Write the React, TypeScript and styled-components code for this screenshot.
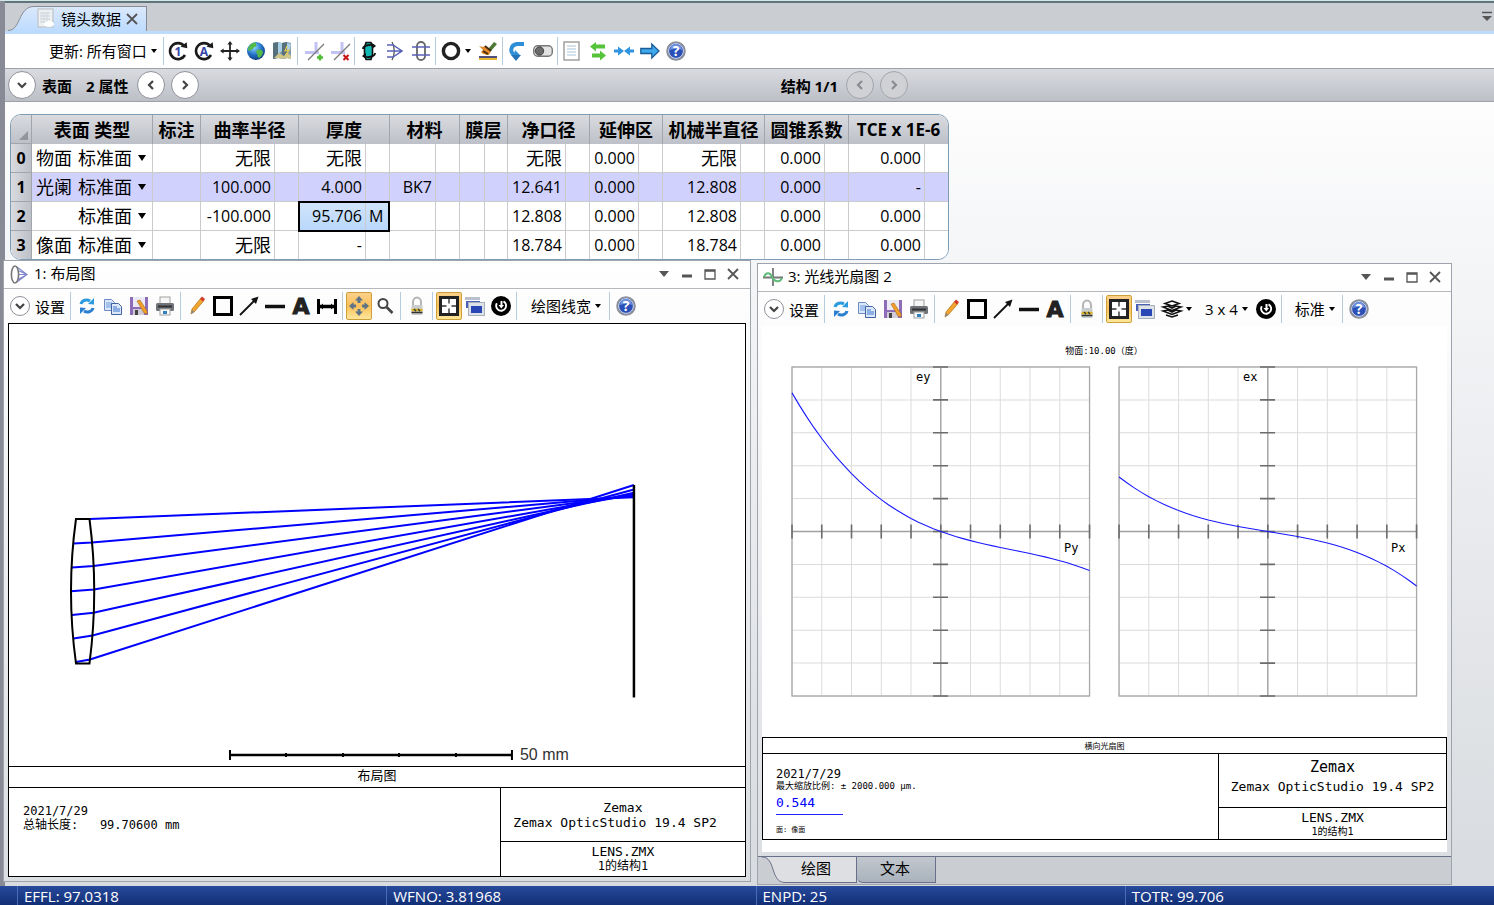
import React from "react";
import styled, { createGlobalStyle, css } from "styled-components";

const ui = `"Open Sans", "Noto Sans CJK SC", sans-serif`;
const mono = `"DejaVu Sans Mono", "Noto Sans CJK SC", monospace`;

const GlobalStyle = createGlobalStyle`
  * { box-sizing: border-box; }
  body { margin: 0; font-family: ${ui}; font-size: 15px; color: #000; }
  button, select { font: inherit; color: inherit; }
`;

/* ---------- shell ---------- */

const Page = styled.div`
  min-height: 100vh;
  display: flex;
  flex-direction: column;
  border-top: 1px solid #d3e6e6;
  background:
    linear-gradient(to right, #888b95 5px, transparent 5px),
    linear-gradient(#fdfdfd 100px, #f4f5f7 270px, #d7dade 100%);
`;

const Editor = styled.section`
  padding-left: 5px;
`;

const TabStrip = styled.div`
  height: 33px;
  display: flex;
  justify-content: space-between;
  align-items: flex-end;
  background: #cacdd2;
  border-top: 2px solid #61757c;
  border-bottom: 3px solid #bddbff;
`;

const DocTab = styled.div`
  display: flex;
  align-items: stretch;
  height: 25px;
`;

const DocTabBody = styled.div`
  display: flex;
  align-items: center;
  gap: 5px;
  padding: 0 8px 2px 2px;
  border: solid #868b96;
  border-width: 1px 1px 0 0;
  background: linear-gradient(#dbe9fb, #bddbff);
`;

const PlainButton = styled.button`
  display: flex;
  align-items: center;
  justify-content: center;
  padding: 0;
  border: 0;
  background: none;
`;

const StripMenu = styled(PlainButton)`
  width: 14px;
  height: 28px;
`;

const Toolbar = styled.div`
  height: 34px;
  display: flex;
  align-items: center;
  white-space: nowrap;
`;

const MainToolbar = styled(Toolbar)`
  padding-left: 44px;
  background: #fff;
`;

const IconButton = styled.button<{ $active?: boolean; $wide?: boolean }>`
  flex: none;
  width: ${(p) => (p.$wide ? 38 : 26)}px;
  height: 28px;
  padding: 0;
  display: flex;
  align-items: center;
  justify-content: center;
  gap: 4px;
  border: 1px solid transparent;
  border-radius: 2px;
  background: none;
  ${(p) =>
    p.$active &&
    css`
      border-color: #d0a038;
      background: linear-gradient(#fbd08a, #fbc15a 50%, #fde79b);
    `}
`;

const Separator = styled.span<{ $wide?: boolean }>`
  flex: none;
  width: 1px;
  height: 28px;
  margin: ${(p) => (p.$wide ? "0 3px 0 2px" : "0 1px")};
  background: #b5cbe0;
`;

const MenuButton = styled.button<{ $left: number; $right: number }>`
  display: flex;
  align-items: center;
  gap: 4px;
  padding: 0 ${(p) => p.$right}px 0 ${(p) => p.$left}px;
  border: 0;
  background: none;
  line-height: 28px;
`;

const PropertyBar = styled.div`
  height: 34px;
  display: grid;
  grid-template-columns: 13fr 12fr;
  align-items: center;
  padding-left: 3px;
  border: solid #9ea1a8;
  border-width: 1px 0;
  background: linear-gradient(#d9dbe0, #bcbfc6);
  font-weight: 700;
`;

const BarGroup = styled.div`
  display: flex;
  align-items: center;
  gap: 6px;
  white-space: nowrap;
`;

const BarLabel = styled.span`
  display: flex;
  gap: 14px;
  padding-right: 2px;
`;

const RoundButton = styled.button<{ $small?: boolean }>`
  flex: none;
  width: ${(p) => (p.$small ? 20 : 28)}px;
  height: ${(p) => (p.$small ? 20 : 28)}px;
  padding: 0;
  display: flex;
  align-items: center;
  justify-content: center;
  border: 1px solid #8f9299;
  border-radius: 50%;
  background: #fff;
  color: #444;
  &:disabled {
    background: #cfd1d5;
    border-color: #a3a5ab;
    color: #8a8c92;
  }
`;

/* ---------- lens table ---------- */

const GridFrame = styled.div`
  width: max-content;
  margin: 12px 0 0 5px;
  border: 1px solid #7d9cb5;
  border-radius: 11px;
  overflow: hidden;
  background: #fff;
`;

const LensTable = styled.table`
  width: 937px;
  table-layout: fixed;
  border-collapse: separate;
  border-spacing: 0;
  line-height: 20px;
`;

const HeadCell = styled.th`
  height: 29px;
  padding: 1px 0 0;
  border-right: 1px solid #a2a5ac;
  background: linear-gradient(#d9dbdf, #bdc0c8);
  font-size: 18px;
  white-space: nowrap;
  &:last-child {
    border-right: 0;
    font-size: 17px;
  }
`;

const CornerCell = styled(HeadCell)`
  border-bottom: 1px solid #a2a5ac;
  vertical-align: bottom;
  text-align: right;
  font-size: 0;
  line-height: 0;
  padding: 0 3px 3px 0;
`;

const Row = styled.tr<{ $stop?: boolean }>`
  background: ${(p) => (p.$stop ? "#d1d1fe" : "#fff")};
  &:last-child > * {
    height: 28px;
    border-bottom: 0;
  }
`;

const IndexCell = styled.th`
  height: 29px;
  padding: 0;
  border: solid #a2a5ac;
  border-width: 0 1px 1px 0;
  background: linear-gradient(to right, #d9dbdf, #bdc0c8);
  font-size: 16px;
`;

const Cell = styled.td<{ $cjk?: boolean; $active?: boolean; $flag?: boolean }>`
  position: relative;
  height: 29px;
  padding: 0 3px;
  border: solid #cbcbcb;
  border-width: 0 1px 1px 0;
  font-size: ${(p) => (p.$cjk ? 18 : 16)}px;
  text-align: ${(p) => (p.$flag ? "left" : "right")};
  white-space: nowrap;
  ${(p) => p.$active && "background: linear-gradient(#d2e4fa, #b9d8fc);"}
  &:last-child {
    border-right: 0;
  }
`;

const TypeCell = styled(Cell)`
  padding: 0;
`;

const FocusRing = styled.span`
  position: absolute;
  inset: -1px -25px -2px -1px;
  border: 2px solid #000;
  z-index: 1;
`;

const TypeLine = styled.div`
  display: flex;
  align-items: center;
  justify-content: space-between;
  padding: 0 6px 0 4px;
`;

const TypePick = styled.label`
  display: flex;
  align-items: center;
  gap: 6px;
`;

const TypeSelect = styled.select`
  appearance: none;
  width: 54px;
  padding: 0;
  border: 0;
  background: none;
  line-height: 24px;
`;

/* ---------- analysis windows ---------- */

const Workspace = styled.main`
  flex: 1;
  display: flex;
  gap: 6px;
  padding: 0 42px 1px 3px;
`;

const AnalysisWindow = styled.section<{ $grow: number; $top: number; $bottom: number }>`
  flex: ${(p) => p.$grow} 1 0;
  min-width: 0;
  display: flex;
  flex-direction: column;
  margin: ${(p) => p.$top}px 0 ${(p) => p.$bottom}px;
  border: 1px solid #9fa3ab;
  background: linear-gradient(#fff, #fcfcfd 64px, #f1f2f4 200px, #dadde1);
`;

const TitleBar = styled.header`
  flex: none;
  height: 28px;
  display: flex;
  align-items: center;
  gap: 5px;
  padding: 0 5px 2px;
  border-bottom: 1px solid #b4b7bc;
`;

const WindowTitle = styled.h2`
  flex: 1;
  margin: 0;
  padding-bottom: 2px;
  font-size: 15px;
  font-weight: 400;
  line-height: 24px;
`;

const WindowButton = styled(PlainButton)`
  width: 23px;
  height: 22px;
`;

const WindowButtons = styled.div`
  display: flex;
`;

const PlotToolbar = styled(Toolbar)`
  padding-left: 6px;
`;

const SettingsToggle = styled.label`
  display: flex;
  align-items: center;
  gap: 5px;
  padding-right: 3px;
`;

const Sheet = styled.div<{ $framed?: boolean }>`
  flex: 1;
  display: flex;
  flex-direction: column;
  margin: 0 4px 4px;
  background: #fff;
  border: ${(p) => (p.$framed ? "1px solid #000" : "0")};
`;

const Plot = styled.svg`
  display: block;
  flex: 1 0 360px;
  width: 100%;
  height: 360px;
`;

const SheetTitle = styled.div<{ $small?: boolean }>`
  height: ${(p) => (p.$small ? 15 : 20)}px;
  line-height: ${(p) => (p.$small ? 17 : 18)}px;
  font-family: ${mono};
  font-size: ${(p) => (p.$small ? 8 : 13)}px;
  text-align: center;
`;

const LayoutCaption = styled(SheetTitle)`
  height: 21px;
  border-top: 1px solid #000;
`;

const Legend = styled.div<{ $side: number }>`
  display: grid;
  grid-template-columns: 1fr ${(p) => p.$side}px;
  border-top: 1px solid #000;
  font-family: ${mono};
  white-space: pre;
`;

const LegendNotes = styled.div`
  padding: 16px 14px 0;
  font-size: 12px;
  line-height: 14px;
`;

const LegendSide = styled.div`
  display: flex;
  flex-direction: column;
  border-left: 1px solid #000;
  text-align: center;
  font-size: 13px;
  line-height: 15px;
`;

const LegendBlock = styled.div<{ $h: number; $rule?: boolean; $above?: number; $below?: number }>`
  height: ${(p) => p.$h}px;
  display: flex;
  flex-direction: column;
  justify-content: center;
  padding: ${(p) => p.$above ?? 0}px 0 ${(p) => p.$below ?? 0}px;
  ${(p) => p.$rule && "border-bottom: 1px solid #000;"}
`;

const Line = styled.div<{ $size: number; $lh: number }>`
  font-size: ${(p) => p.$size}px;
  line-height: ${(p) => p.$lh}px;
`;

const LegendBox = styled.div`
  margin-bottom: 12px;
  border: 1px solid #000;
`;

const FieldNotes = styled.div`
  padding: 14px 13px 0;
`;

const FieldKey = styled.div`
  width: 67px;
  margin-bottom: 9px;
  border-bottom: 1px solid #22f;
  color: #00f;
`;

const ViewTabs = styled.div`
  flex: none;
  height: 28px;
  display: flex;
  background: #cacdd2;
  border-top: 1px solid #69718a;
`;

const ViewTab = styled.button<{ $active?: boolean }>`
  height: 26px;
  padding: 0 25px 3px ${(p) => (p.$active ? 16 : 23)}px;
  border: solid #69718a;
  border-width: 0 1px 1px 0;
  border-bottom-left-radius: ${(p) => (p.$active ? 0 : 6)}px;
  background: ${(p) => (p.$active ? "#dddfe2" : "linear-gradient(#c2c7ce, #a9b2bc)")};
  line-height: 22px;
`;

const StatusBar = styled.footer`
  flex: none;
  height: 19px;
  display: flex;
  padding-left: 17px;
  overflow: hidden;
  background: linear-gradient(#274a9c, #122f76);
  color: #fff;
`;

const StatusItem = styled.div`
  flex: 0 0 25%;
  padding-left: 6px;
  border-left: 1px solid #4a6bb5;
  line-height: 20px;
`;

/* ---------- icons ---------- */

const Drawing = styled.svg`
  flex: none;
  overflow: visible;
`;

const Svg = ({ children, w = 20, h = 20 }: { children: React.ReactNode; w?: number; h?: number }) => (
  <Drawing width={w} height={h} viewBox={`0 0 ${w} ${h}`} fill="none" aria-hidden="true">
    {children}
  </Drawing>
);

const Caret = ({ w = 6, fill = "#000" }: { w?: number; fill?: string }) => (
  <svg width={w} height={w > 6 ? 6 : 4} viewBox="0 0 8 5" preserveAspectRatio="none" aria-hidden="true">
    <path d="M0 0h8L4 5z" fill={fill} />
  </svg>
);

const Chevron = ({ d, s = 10 }: { d: "down" | "left" | "right"; s?: number }) => (
  <svg width={s} height={s} viewBox="0 0 10 10" fill="none" aria-hidden="true">
    <path
      d={{ down: "M1 3l4 4 4-4", left: "M7 1L3 5l4 4", right: "M3 1l4 4-4 4" }[d]}
      stroke="currentColor"
      strokeWidth="2.2"
    />
  </svg>
);

const CycleIcon = ({ letter }: { letter: string }) => (
  <Svg>
    <path d="M16 4.8A8 8 0 1 0 17 14" stroke="#1a1a1a" strokeWidth="2.6" />
    <path d="M12.5 5.8l6.8 1.4-.6-6z" fill="#1a1a1a" />
    <text x="10" y="14.5" textAnchor="middle" fontSize="12" fontWeight="700" fill="#3344a8">
      {letter}
    </text>
  </Svg>
);

const MoveIcon = () => (
  <Svg>
    <path d="M10 2v16M2 10h16" stroke="#222" strokeWidth="1.8" />
    <path d="M10 0l2.6 3.6H7.4zM10 20l2.6-3.6H7.4zM0 10l3.6-2.6v5.2zM20 10l-3.6-2.6v5.2z" fill="#222" />
  </Svg>
);

const GlobeIcon = () => (
  <Svg>
    <defs>
      <radialGradient id="globe" cx=".4" cy=".3" r=".8">
        <stop offset="0" stopColor="#8fd6ff" />
        <stop offset=".5" stopColor="#2574c9" />
        <stop offset="1" stopColor="#0b2c70" />
      </radialGradient>
    </defs>
    <circle cx="10" cy="10" r="9" fill="url(#globe)" />
    <path d="M4 4c2-2 5-3 6-2 0 2 1 3-1 4-2 0-2 3-4 3-1 1-3 1-3 0 0-2 1-4 2-5zM11 9c2-1 6 0 6 2s-2 5-4 6c-2-1-1-3-2-4s-1-3 0-4z" fill="#54b948" />
  </Svg>
);

const MapIcon = () => (
  <Svg>
    <path d="M1 2l5-1 4 1 5-1 4 1v16l-4-1-5 1-4-1-5 1z" fill="#7d99a8" />
    <path d="M1 2l5-1v16l-5 1zM10 2l5-1v16l-5 1z" fill="#56707c" />
    <path d="M6 1l4 1v8l-4 3zM15 2l4 1-1 6-3 2z" fill="#a9cfe4" />
    <path d="M2 17l5-5 5 3 3-4 4 4v3l-4-1-5 1-4-1z" fill="#cfc68a" />
    <path d="M15 5l-2 5 4-1-3 5" stroke="#e8c948" strokeWidth="1.2" />
  </Svg>
);

const AxisIcon = ({ remove }: { remove?: boolean }) => (
  <Svg>
    <path d="M12 1v11" stroke="#c2c2f4" strokeWidth="3" />
    <path d="M1 11.5h14" stroke="#c2c2f4" strokeWidth="3" />
    <path d="M4 19L20 3" stroke="#7a7a7a" strokeWidth="1.2" />
    {remove ? (
      <path d="M13.5 14l5 5M18.5 14l-5 5" stroke="#c81414" strokeWidth="2" />
    ) : (
      <path d="M16 13.5v6M13 16.5h6" stroke="#4cbb35" strokeWidth="2.4" />
    )}
  </Svg>
);

const LensTurnIcon = () => (
  <Svg>
    <path d="M7 1.5h5l1.5 5v7l-1.5 5H7l-1.5-5v-7z" fill="#12b9b4" stroke="#111" strokeWidth="1.6" />
    <path d="M4 8c0-4 8-5 12-3M16 12c0 4-8 5-12 3" stroke="#111" strokeWidth="1.8" />
    <path d="M13 2l4 3-4 3zM7 12l-4 3 4 3z" fill="#111" />
  </Svg>
);

const RaysIcon = () => (
  <Svg>
    <path d="M7 1c3 5 3 13 0 18" stroke="#555" strokeWidth="1.3" />
    <path d="M2 4h6l9 6-9 6H2M2 10h15" stroke="#5a60b8" strokeWidth="1.5" />
  </Svg>
);

const ThroughIcon = () => (
  <Svg>
    <rect x="6" y="1" width="8" height="18" rx="4" stroke="#666" strokeWidth="1.8" />
    <path d="M1 6h18M1 14h18" stroke="#5a60b8" strokeWidth="1.7" />
  </Svg>
);

const RingIcon = () => (
  <Svg>
    <circle cx="10" cy="10" r="7.6" stroke="#222" strokeWidth="3.4" />
  </Svg>
);

const BrushIcon = () => (
  <Svg>
    <path d="M10 8l6-7 3 2-6 7z" fill="#4d7a35" />
    <path d="M1 5l4 1 2-1 6 5-2 4c-3 0-6 0-8-3l2-2z" fill="#e08a2a" />
    <path d="M7 5l6 5M5 10l5 3" stroke="#4a2a10" strokeWidth="2" />
    <path d="M1 16h18" stroke="#22225c" strokeWidth="1.6" />
    <path d="M1 18h18" stroke="#e8b72e" strokeWidth="2" />
  </Svg>
);

const UndoIcon = () => (
  <Svg>
    <path d="M17 3H10C3 4 2 13 9 14" stroke="#2f8fd6" strokeWidth="4" />
    <path d="M4 14h10l-5 6z" fill="#2672b6" />
    <path d="M8 9l5 5H7z" fill="#2f8fd6" />
  </Svg>
);

const ToggleIcon = () => (
  <Svg>
    <rect x=".7" y="4.7" width="18.6" height="10.6" rx="4" fill="#e3e3e3" stroke="#777" strokeWidth="1.4" />
    <circle cx="6.5" cy="10" r="4.2" fill="#6a6a6a" stroke="#444" />
  </Svg>
);

const SheetIcon = ({ tab }: { tab?: boolean }) => (
  <Svg>
    <rect x="2" y="1" width="15" height="18" fill={tab ? "#eef1f4" : "#fff"} stroke={tab ? "#c3c8ce" : "#9a9a9a"} strokeWidth="1.4" />
    <path d="M5 5h9M5 8h9M5 11h9M5 14h9" stroke={tab ? "#c9ced6" : "#a8c4dc"} />
    {tab && <path d="M5 4v11M8 4v11M11 4v11" stroke="#d3d8de" />}
    {tab && <ellipse cx="13" cy="16" rx="5" ry="3" fill="#fff" />}
  </Svg>
);

const SwapIcon = () => (
  <Svg>
    <path d="M8 1L2 5.500l6 5V7.500h9v-4H8zM12 9.500l6 5-6 5v-3H4v-4h8z" fill="#56c43a" />
  </Svg>
);

const InwardIcon = () => (
  <Svg>
    <path d="M0 8.500h4V5.500l6 4.500-6 4.500v-3H0zM20 8.500h-4V5.500L10 10l6 4.500v-3h4z" fill="#2f95e0" />
  </Svg>
);

const ForwardIcon = () => (
  <Svg>
    <path d="M.8 7.500h11V3l7.200 7-7.200 7v-4.500h-11z" fill="#3fa9ee" stroke="#1b5c96" strokeWidth="1.300" />
  </Svg>
);

const HelpIcon = () => (
  <Svg>
    <circle cx="10" cy="10" r="8.800" fill="#2a50b8" stroke="#8a8f9a" strokeWidth="2" />
    <circle cx="10" cy="10" r="7.400" stroke="#d6dcec" strokeWidth="1" />
    <path d="M4 9a6 6 0 0 1 12 0c-4-2-8-1-12 0z" fill="#6f92e0" />
    <text x="10" y="15" textAnchor="middle" fontSize="14" fontWeight="700" fill="#fff">?</text>
  </Svg>
);

const RefreshIcon = () => (
  <Svg>
    <path d="M4 8c1-4 6-5 9-3" stroke="#2b9be0" strokeWidth="3" />
    <path d="M11 8l6 .5V2z" fill="#2b9be0" />
    <path d="M16 12c-1 4-6 5-9 3" stroke="#2b7fd0" strokeWidth="3" />
    <path d="M9 12l-6-.5V18z" fill="#2b7fd0" />
  </Svg>
);

const CopyIcon = () => (
  <Svg>
    <path d="M1.500 3.500h7l3 3v8h-10z" fill="#dbe8fa" stroke="#6d8cc4" />
    <path d="M3 7h6M3 9h6M3 11h6" stroke="#6d9be0" />
    <path d="M8.500 7.500h7l3 3v8h-10z" fill="#dbe8fa" stroke="#41629e" />
    <path d="M10 11h4M10 13h7M10 15h7" stroke="#3f75cf" />
  </Svg>
);

const SaveIcon = () => (
  <Svg>
    <rect x="1" y="1" width="18" height="18" fill="#8f6cb8" />
    <rect x="4" y="1" width="12" height="10" fill="#eceaf4" />
    <rect x="4" y="13" width="11" height="6" fill="#cfcbd8" />
    <rect x="6" y="14" width="3" height="5" fill="#444" />
    <path d="M8 5l3-1 7 11v3l-3-1z" fill="#f2a02c" stroke="#a86a14" strokeWidth=".6" />
  </Svg>
);

const PrintIcon = () => (
  <Svg>
    <rect x="5" y="1" width="10" height="7" fill="#f6f6f6" stroke="#a0a0a0" />
    <rect x="1" y="7" width="18" height="8" rx="1.500" fill="#707478" />
    <path d="M3 10.500h14" stroke="#303234" strokeWidth="2" />
    <rect x="5" y="13" width="10" height="6" fill="#fafafa" stroke="#a0a0a0" />
    <rect x="8" y="15" width="4" height="3" fill="#2f80c0" />
  </Svg>
);

const PencilIcon = () => (
  <Svg>
    <path d="M4 18l1-5L14 2l3 2.500L8 15z" fill="#f2a530" stroke="#b97a1a" strokeWidth=".8" />
    <path d="M13 3l2-2.500L18 3l-2 2.500z" fill="#d33a2c" />
    <path d="M4 18l1-4 2.500 2z" fill="#888" />
  </Svg>
);

const SquareIcon = () => (
  <Svg>
    <rect x="1.500" y="1.500" width="17" height="17" stroke="#000" strokeWidth="3" />
  </Svg>
);

const ArrowIcon = () => (
  <Svg>
    <path d="M1 19L15 5" stroke="#111" strokeWidth="1.800" />
    <path d="M19.500.5L17 8l-5-5z" fill="#111" />
  </Svg>
);

const LineIcon = () => (
  <Svg>
    <path d="M0 10.500h20" stroke="#111" strokeWidth="3.500" />
  </Svg>
);

const LetterIcon = () => (
  <Svg>
    <text x="10" y="18" textAnchor="middle" fontFamily="DejaVu Sans" fontSize="22" fontWeight="700" fill="#222" stroke="#222">
      A
    </text>
  </Svg>
);

const SpanIcon = () => (
  <Svg>
    <path d="M1.500 3v15M18.500 3v15" stroke="#000" strokeWidth="3" />
    <path d="M2 10.500h16" stroke="#000" strokeWidth="3.500" />
    <path d="M3 10.500l3-3v6zM17 10.500l-3-3v6z" fill="#000" />
  </Svg>
);

const PanIcon = () => (
  <Svg>
    <path
      d="M10 0l4 4.500h-2.500V7h-3V4.500H6zM10 20l4-4.500h-2.500V13h-3v2.500H6zM0 10l4.500-4v2.500H7v3H4.500V14zM20 10l-4.500-4v2.500H13v3h2.500V14z"
      fill="#5f7387"
    />
  </Svg>
);

const ZoomIcon = () => (
  <Svg>
    <circle cx="8" cy="7.500" r="4.500" stroke="#444" strokeWidth="2" />
    <path d="M11.500 11l6 6" stroke="#444" strokeWidth="2.600" />
  </Svg>
);

const LockIcon = () => (
  <Svg>
    <path d="M6 10V6a4 4.500 0 0 1 8 0v4" stroke="#b4b4b4" strokeWidth="2" />
    <rect x="4.500" y="9" width="11" height="10" rx="1" fill="#c9cdd0" />
    <path d="M4.500 14h11" stroke="#dcb521" strokeWidth="2.500" />
    <path d="M4.500 16.500h11M7 13l2 2M11 13l2 2" stroke="#333" strokeWidth="1.300" />
  </Svg>
);

const FitIcon = () => (
  <Svg>
    <rect x="1.500" y="1.500" width="17" height="17" fill="#fff" stroke="#222" strokeWidth="3" />
    <path d="M10 3v4.500M10 12.500V17M3 10h4.500M12.500 10H17" stroke="#333" strokeWidth="1.400" />
  </Svg>
);

const WindowsIcon = () => (
  <Svg>
    <rect x="0" y="1" width="15" height="3" fill="#b9c0cc" />
    <path d="M1 5h14v7H1z" fill="#4a60b8" />
    <rect x="3.500" y="6.500" width="16" height="13" fill="#dde1e8" stroke="#a9b0bd" />
    <rect x="6" y="10" width="11" height="7" fill="#2a46b4" />
  </Svg>
);

const ResetIcon = () => (
  <Svg>
    <circle cx="10" cy="10" r="10" fill="#000" />
    <path d="M5.800 7.200a5 5 0 1 0 6.700-1.900" stroke="#fff" strokeWidth="1.900" />
    <path d="M10.500 5v5" stroke="#fff" strokeWidth="2" />
    <path d="M7.500 9h5.500l-2.700 3.500z" fill="#fff" />
  </Svg>
);

const LayersIcon = () => (
  <Svg>
    <path
      d="M10 2l7 2.500-7 2.500-7-2.500zM1 8l5-1 4 2 4-2 5 1-9 3.500zM1 12l5-1 4 2 4-2 5 1-9 3.500zM4 16l6 2 6-2"
      stroke="#111"
      strokeWidth="1.600"
    />
  </Svg>
);

const LayoutIcon = () => (
  <Svg>
    <path d="M8 6l10 4.500L8 16M8 3l10 7.500L8 18M9 10.500h8" stroke="#8086cc" strokeWidth="1.100" />
    <ellipse cx="6" cy="10.500" rx="3.600" ry="8.500" fill="#fff" stroke="#777" strokeWidth="1.600" />
  </Svg>
);

const FanIcon = () => (
  <Svg>
    <path d="M10 1v18M0 10.500h20" stroke="#777" strokeWidth="1.800" />
    <path d="M1 10c2-5 6-5 8 0s8 6 10 1" stroke="#5dbb78" strokeWidth="2" />
  </Svg>
);

/* ---------- data ---------- */

const columnWidths = [21, 121, 48, 74, 24, 67, 24, 46, 24, 25, 23, 58, 24, 49, 24, 78, 24, 60, 24, 76, 23];

const headings = ["曲率半径", "厚度", "材料", "膜层", "净口径", "延伸区", "机械半直径", "圆锥系数", "TCE x 1E-6"];

const surfaces = [
  { role: "物面", values: ["无限", "无限", "", "", "无限", "0.000", "无限", "0.000", "0.000"] },
  { role: "光阑", values: ["100.000", "4.000", "BK7", "", "12.641", "0.000", "12.808", "0.000", "-"] },
  { role: "", values: ["-100.000", "95.706", "", "", "12.808", "0.000", "12.808", "0.000", "0.000"] },
  { role: "像面", values: ["无限", "-", "", "", "18.784", "0.000", "18.784", "0.000", "0.000"] },
];

/* front surface, back surface and image height of each traced ray */
const rays = [
  [67, 195, 81, 195, 173.2],
  [64.5, 219.5, 83, 218.5, 172.1],
  [63, 243.5, 84.5, 242, 171.3],
  [62, 267.3, 85, 265.5, 170.5],
  [63, 291, 84.5, 288.7, 168.7],
  [64.5, 314.5, 83.5, 311.5, 165.5],
  [67, 338, 81, 335.5, 161],
];

const steps = Array.from({ length: 11 }, (_, i) => i);

const curve = (a: number, b: number, c: number) =>
  Array.from({ length: 41 }, (_, i) => {
    const p = i / 20 - 1;
    return `${148.75 + 148.75 * p},${164.5 + a * p + b * p * p + c * p * p * p}`;
  }).join(" ");

const fans = [
  { x: 30, y: "ey", p: "Py", points: curve(54.2, -49.8, 34.6) },
  { x: 357, y: "ex", p: "Px", points: curve(24, 0, 30.5) },
];

const FanChart = ({ fan }: { fan: (typeof fans)[number] }) => (
  <g transform={`translate(${fan.x} 40.500)`}>
    {steps.map((i) => (
      <path key={i} d={`M${i * 29.75} 0v329M0 ${i * 32.9}h297.500`} stroke="#dcdcdc" />
    ))}
    <rect width="297.500" height="329" stroke="#a8a8a8" fill="none" strokeWidth="1.300" />
    <path d="M148.750 0v329M0 164.500h297.500" stroke="#a0a0a0" strokeWidth="1.300" />
    {steps.map((i) => (
      <path key={i} d={`M${i * 29.75} 157.500v14M141 ${i * 32.9}h15`} stroke="#6c6c6c" strokeWidth="1.600" />
    ))}
    <polyline points={fan.points} fill="none" stroke="#1a1aff" strokeWidth="1.100" />
    <text x="124" y="14">{fan.y}</text>
    <text x="272" y="185">{fan.p}</text>
  </g>
);

const Tool = ({ label, children, active, menu }: { label: string; children: React.ReactNode; active?: boolean; menu?: boolean }) => (
  <IconButton type="button" aria-label={label} $active={active} $wide={menu}>
    {children}
    {menu && <Caret />}
  </IconButton>
);

const WindowHeader = ({ icon, title }: { icon: React.ReactNode; title: string }) => (
  <TitleBar>
    {icon}
    <WindowTitle>{title}</WindowTitle>
    <WindowButtons>
      <WindowButton type="button" aria-label="菜单"><Caret w={10} fill="#555" /></WindowButton>
      <WindowButton type="button" aria-label="最小化">
        <Svg w={12} h={12}><path d="M1 8h10" stroke="#555" strokeWidth="3" /></Svg>
      </WindowButton>
      <WindowButton type="button" aria-label="最大化">
        <Svg w={12} h={12}><path d="M1 2h10v9H1zM1 3h10" stroke="#555" strokeWidth="1.300" /></Svg>
      </WindowButton>
      <WindowButton type="button" aria-label="关闭">
        <Svg w={12} h={12}><path d="M1 1l10 10M11 1L1 11" stroke="#555" strokeWidth="1.800" /></Svg>
      </WindowButton>
    </WindowButtons>
  </TitleBar>
);

const CommonTools = ({ id }: { id: string }) => (
  <>
    <SettingsToggle htmlFor={id}>
      <RoundButton type="button" id={id} $small><Chevron d="down" /></RoundButton>
      设置
    </SettingsToggle>
    <Separator $wide />
    <Tool label="刷新"><RefreshIcon /></Tool>
    <Tool label="复制"><CopyIcon /></Tool>
    <Tool label="保存"><SaveIcon /></Tool>
    <Tool label="打印"><PrintIcon /></Tool>
    <Separator $wide />
    <Tool label="铅笔"><PencilIcon /></Tool>
    <Tool label="矩形"><SquareIcon /></Tool>
    <Tool label="箭头"><ArrowIcon /></Tool>
    <Tool label="直线"><LineIcon /></Tool>
    <Tool label="文字"><LetterIcon /></Tool>
  </>
);

export default function App() {
  return (
    <Page>
      <GlobalStyle />
      <Editor>
        <TabStrip>
          <DocTab>
            <svg width="29" height="25" viewBox="0 0 29 25" aria-hidden="true">
              <defs>
                <linearGradient id="tab" x1="0" y1="0" x2="0" y2="1">
                  <stop offset="0" stopColor="#dbe9fb" />
                  <stop offset="1" stopColor="#bddbff" />
                </linearGradient>
              </defs>
              <path d="M3 25C16 25 13 .5 29 .5V25z" fill="url(#tab)" />
              <path d="M3 24.500C16 24.500 13 .5 29 .5" fill="none" stroke="#868b96" />
            </svg>
            <DocTabBody>
              <SheetIcon tab />
              镜头数据
              <PlainButton type="button" aria-label="关闭">
                <Svg w={12} h={12}><path d="M1 2l10 10M11 2L1 12" stroke="#555" strokeWidth="1.800" /></Svg>
              </PlainButton>
            </DocTabBody>
          </DocTab>
          <StripMenu type="button" aria-label="窗口列表">
            <Svg w={12} h={12}><path d="M1 1.500h10" stroke="#555" strokeWidth="1.500" /><path d="M1 5h10l-5 5z" fill="#555" /></Svg>
          </StripMenu>
        </TabStrip>

        <MainToolbar>
          <MenuButton type="button" $left={0} $right={5}>更新: 所有窗口<Caret /></MenuButton>
          <Separator />
          <Tool label="更新一次"><CycleIcon letter="1" /></Tool>
          <Tool label="全部更新"><CycleIcon letter="A" /></Tool>
          <Tool label="移动"><MoveIcon /></Tool>
          <Tool label="全局"><GlobeIcon /></Tool>
          <Tool label="地图"><MapIcon /></Tool>
          <Separator $wide />
          <Tool label="添加坐标断点"><AxisIcon /></Tool>
          <Tool label="删除坐标断点"><AxisIcon remove /></Tool>
          <Separator />
          <Tool label="反转元件"><LensTurnIcon /></Tool>
          <Tool label="光线"><RaysIcon /></Tool>
          <Tool label="元件"><ThroughIcon /></Tool>
          <Separator />
          <Tool label="孔径" menu><RingIcon /></Tool>
          <Tool label="膜层"><BrushIcon /></Tool>
          <Separator />
          <Tool label="撤消"><UndoIcon /></Tool>
          <Tool label="切换"><ToggleIcon /></Tool>
          <Separator />
          <Tool label="列表"><SheetIcon /></Tool>
          <Tool label="交换"><SwapIcon /></Tool>
          <Tool label="收缩"><InwardIcon /></Tool>
          <Tool label="前往"><ForwardIcon /></Tool>
          <Tool label="帮助"><HelpIcon /></Tool>
        </MainToolbar>

        <PropertyBar>
          <BarGroup>
            <RoundButton type="button" aria-label="展开"><Chevron d="down" /></RoundButton>
            <BarLabel><span>表面</span><span>2 属性</span></BarLabel>
            <RoundButton type="button" aria-label="上一个"><Chevron d="left" /></RoundButton>
            <RoundButton type="button" aria-label="下一个"><Chevron d="right" /></RoundButton>
          </BarGroup>
          <BarGroup>
            <BarLabel>结构 1/1</BarLabel>
            <RoundButton type="button" disabled aria-label="上一结构"><Chevron d="left" /></RoundButton>
            <RoundButton type="button" disabled aria-label="下一结构"><Chevron d="right" /></RoundButton>
          </BarGroup>
        </PropertyBar>

        <GridFrame>
          <LensTable>
            <colgroup>
              {columnWidths.map((w, i) => <col key={i} width={w} />)}
            </colgroup>
            <thead>
              <tr>
                <CornerCell><Svg w={9} h={9}><path d="M9 0v9H0z" fill="#92959b" /></Svg></CornerCell>
                <HeadCell>表面 类型</HeadCell>
                <HeadCell>标注</HeadCell>
                {headings.map((h) => <HeadCell key={h} colSpan={2}>{h}</HeadCell>)}
              </tr>
            </thead>
            <tbody>
              {surfaces.map((s, r) => (
                <Row key={r} $stop={r === 1}>
                  <IndexCell scope="row">{r}</IndexCell>
                  <TypeCell $cjk>
                    <TypeLine>
                      <span>{s.role}</span>
                      <TypePick>
                        <TypeSelect aria-label={`表面 ${r} 类型`} defaultValue="标准面">
                          <option>标准面</option>
                        </TypeSelect>
                        <Caret w={8} />
                      </TypePick>
                    </TypeLine>
                  </TypeCell>
                  <Cell />
                  {s.values.map((v, c) => {
                    const active = r === 2 && c === 1;
                    return (
                      <React.Fragment key={c}>
                        <Cell $cjk={v === "无限"} $active={active}>
                          {v}
                          {active && <FocusRing />}
                        </Cell>
                        <Cell $active={active} $flag>{active ? "M" : ""}</Cell>
                      </React.Fragment>
                    );
                  })}
                </Row>
              ))}
            </tbody>
          </LensTable>
        </GridFrame>
      </Editor>

      <Workspace>
        <AnalysisWindow $grow={748} $top={0} $bottom={3}>
          <WindowHeader icon={<LayoutIcon />} title="1: 布局图" />
          <PlotToolbar>
            <CommonTools id="settings-layout" />
            <Tool label="标尺"><SpanIcon /></Tool>
            <Separator $wide />
            <Tool label="平移" active><PanIcon /></Tool>
            <Tool label="缩放"><ZoomIcon /></Tool>
            <Separator $wide />
            <Tool label="锁定"><LockIcon /></Tool>
            <Separator $wide />
            <Tool label="适合窗口" active><FitIcon /></Tool>
            <Tool label="窗口"><WindowsIcon /></Tool>
            <Tool label="重置"><ResetIcon /></Tool>
            <Separator $wide />
            <MenuButton type="button" $left={11} $right={6}>绘图线宽<Caret /></MenuButton>
            <Separator $wide />
            <Tool label="帮助"><HelpIcon /></Tool>
          </PlotToolbar>
          <Sheet $framed>
            <Plot viewBox="0 0 736 442" role="img" aria-label="布局图">
              <g fill="none" stroke="#00f" strokeWidth="2">
                {rays.map(([x1, y1, x2, y2, y3]) => (
                  <path key={y1} d={`M${x1} ${y1}L${x2} ${y2}L625 ${y3}`} />
                ))}
              </g>
              <g fill="none" stroke="#000" strokeWidth="2">
                <path d="M67 195Q57 267 67 339.500H80.500Q90 267 80.500 195z" />
                <path d="M625 161v212.500" strokeWidth="2.500" />
                <path d="M221 431h282" strokeWidth="2.500" />
                <path d="M221 426v10M503 426v10M277 429v4M334 429v4M390 429v4M447 429v4" />
              </g>
              <text x="511" y="436" fontFamily="Liberation Sans, sans-serif" fontSize="16" fill="#333">50 mm</text>
            </Plot>
            <LayoutCaption>布局图</LayoutCaption>
            <Legend $side={245}>
              <LegendNotes>{"2021/7/29\n总轴长度:   99.70600 mm"}</LegendNotes>
              <LegendSide>
                <LegendBlock $h={54} $rule>
                  <span>Zemax</span>
                  <span>{"Zemax OpticStudio 19.4 SP2  "}</span>
                </LegendBlock>
                <LegendBlock $h={34}>
                  <span>LENS.ZMX</span>
                  <Line $size={12} $lh={15}>1的结构1</Line>
                </LegendBlock>
              </LegendSide>
            </Legend>
          </Sheet>
        </AnalysisWindow>

        <AnalysisWindow $grow={695} $top={3} $bottom={0}>
          <WindowHeader icon={<FanIcon />} title="3: 光线光扇图 2" />
          <PlotToolbar>
            <CommonTools id="settings-fan" />
            <Separator $wide />
            <Tool label="锁定"><LockIcon /></Tool>
            <Separator $wide />
            <Tool label="适合窗口" active><FitIcon /></Tool>
            <Tool label="窗口"><WindowsIcon /></Tool>
            <Tool label="图层" menu><LayersIcon /></Tool>
            <MenuButton type="button" $left={9} $right={5}>3 x 4<Caret /></MenuButton>
            <Tool label="重置"><ResetIcon /></Tool>
            <Separator $wide />
            <MenuButton type="button" $left={10} $right={5}>标准<Caret /></MenuButton>
            <Separator $wide />
            <Tool label="帮助"><HelpIcon /></Tool>
          </PlotToolbar>
          <Sheet>
            <Plot viewBox="0 0 685 410" role="img" aria-label="光线光扇图" fontFamily={mono} fontSize="12">
              <text x="342" y="28" fontSize="9" textAnchor="middle">物面:10.00（度）</text>
              {fans.map((f) => <FanChart key={f.y} fan={f} />)}
            </Plot>
            <LegendBox>
              <SheetTitle $small>横向光扇图</SheetTitle>
              <Legend $side={228}>
                <FieldNotes>
                  <Line $size={12} $lh={12}>2021/7/29</Line>
                  <Line $size={9} $lh={12}>最大缩放比例: ± 2000.000 µm.</Line>
                  <FieldKey><Line $size={13} $lh={22}>0.544</Line></FieldKey>
                  <Line $size={7} $lh={12}>面: 像面</Line>
                </FieldNotes>
                <LegendSide>
                  <LegendBlock $h={54} $rule $below={8}>
                    <Line $size={15} $lh={19}>Zemax</Line>
                    <Line $size={13} $lh={19}>Zemax OpticStudio 19.4 SP2</Line>
                  </LegendBlock>
                  <LegendBlock $h={31} $above={3}>
                    <Line $size={13} $lh={14}>LENS.ZMX</Line>
                    <Line $size={10} $lh={14}>1的结构1</Line>
                  </LegendBlock>
                </LegendSide>
              </Legend>
            </LegendBox>
          </Sheet>
          <ViewTabs>
            <svg width="27" height="27" viewBox="0 0 27 27" aria-hidden="true">
              <path d="M4 0C18 0 12 25.500 27 25.500V0z" fill="#dddfe2" />
              <path d="M4 0C18 0 12 25.500 27 25.500" fill="none" stroke="#69718a" />
            </svg>
            <ViewTab type="button" $active>绘图</ViewTab>
            <ViewTab type="button">文本</ViewTab>
          </ViewTabs>
        </AnalysisWindow>
      </Workspace>

      <StatusBar>
        <StatusItem>EFFL: 97.0318</StatusItem>
        <StatusItem>WFNO: 3.81968</StatusItem>
        <StatusItem>ENPD: 25</StatusItem>
        <StatusItem>TOTR: 99.706</StatusItem>
      </StatusBar>
    </Page>
  );
}
